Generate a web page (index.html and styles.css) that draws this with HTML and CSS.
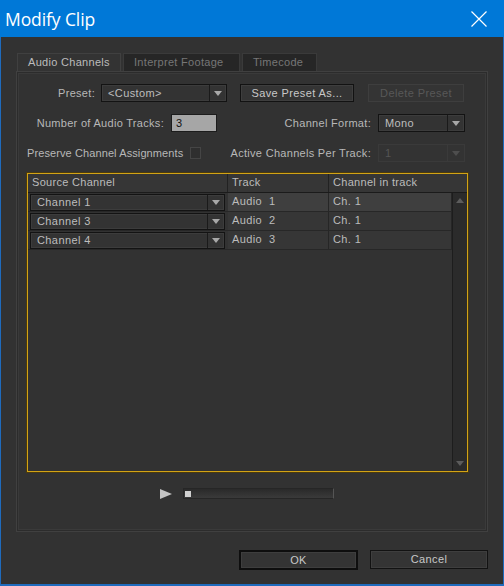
FILE: index.html
```html
<!DOCTYPE html>
<html>
<head>
<meta charset="utf-8">
<link rel="stylesheet" href="styles.css">
</head>
<body>
<div class="window">
  <div class="titlebar">
    <span class="title">Modify Clip</span>
    <svg class="close" width="16" height="16" viewBox="0 0 16 16"><path d="M0.5 0.5 L15.5 15.5 M15.5 0.5 L0.5 15.5" stroke="#ffffff" stroke-width="1.2" fill="none"/></svg>
  </div>
  <div class="content">
    <div class="tabs">
      <div class="tab active">Audio Channels</div>
      <div class="tab">Interpret Footage</div>
      <div class="tab">Timecode</div>
    </div>
    <div class="panel">
      <div class="row">
        <div class="label lab-preset">Preset:</div>
        <div class="dropdown dd-preset"><span class="dd-text">&lt;Custom&gt;</span><span class="dd-arrow"><i class="tri"></i></span></div>
        <div class="btn btn-save">Save Preset As...</div>
        <div class="btn btn-delete disabled">Delete Preset</div>
      </div>
      <div class="row">
        <div class="label lab-tracks">Number of Audio Tracks:</div>
        <div class="input">3</div>
        <div class="label lab-right">Channel Format:</div>
        <div class="dropdown dd-small"><span class="dd-text">Mono</span><span class="dd-arrow"><i class="tri"></i></span></div>
      </div>
      <div class="row">
        <div class="label lab-preserve">Preserve Channel Assignments</div>
        <div class="checkbox"></div>
        <div class="label lab-right2">Active Channels Per Track:</div>
        <div class="dropdown dd-small disabled"><span class="dd-text">1</span><span class="dd-arrow"><i class="tri"></i></span></div>
      </div>

      <div class="table">
        <div class="thead">
          <div class="col c-src">Source Channel</div>
          <div class="col c-trk">Track</div>
          <div class="col c-ch">Channel in track</div>
        </div>
        <div class="tbody">
          <div class="rows">
            <div class="trow selected">
              <div class="col c-src"><div class="dropdown dd-cell"><span class="dd-text">Channel 1</span><span class="dd-arrow"><i class="tri"></i></span></div></div>
              <div class="col c-trk cell">Audio&nbsp; 1</div>
              <div class="col c-ch cell">Ch. 1</div>
            </div>
            <div class="trow">
              <div class="col c-src"><div class="dropdown dd-cell"><span class="dd-text">Channel 3</span><span class="dd-arrow"><i class="tri"></i></span></div></div>
              <div class="col c-trk cell">Audio&nbsp; 2</div>
              <div class="col c-ch cell">Ch. 1</div>
            </div>
            <div class="trow">
              <div class="col c-src"><div class="dropdown dd-cell"><span class="dd-text">Channel 4</span><span class="dd-arrow"><i class="tri"></i></span></div></div>
              <div class="col c-trk cell">Audio&nbsp; 3</div>
              <div class="col c-ch cell">Ch. 1</div>
            </div>
          </div>
          <div class="scrollbar">
            <i class="sb-up"></i>
            <i class="sb-down"></i>
          </div>
        </div>
      </div>

      <div class="player">
        <svg class="play" width="12" height="10" viewBox="0 0 12 10"><path d="M0 0 L12 5 L0 10 Z" fill="#c4c4c4"/></svg>
        <div class="slider"><div class="thumb"></div></div>
      </div>
    </div>
    <div class="buttons">
      <div class="btn btn-ok">OK</div>
      <div class="btn btn-cancel">Cancel</div>
    </div>
  </div>
</div>
</body>
</html>
```

FILE: styles.css
```css
* { box-sizing: border-box; }
html, body { margin: 0; padding: 0; background: #323232; }
body { font-family: "Liberation Sans", Arial, sans-serif; font-size: 11px; color: #b8b8b8; }

.window {
  width: 504px; height: 586px;
  background: #323232;
  border-left: 1px solid #1f6bbd;
  border-right: 1px solid #1f6bbd;
  border-bottom: 2px solid #1f6bbd;
  display: flex; flex-direction: column;
}
.titlebar {
  height: 37px; background: #0078d7;
  margin: 0 -1px;
  display: flex; align-items: center; justify-content: space-between;
  padding: 0 17px 0 5px;
}
.title { font-family: "Open Sans", "Noto Sans", sans-serif; font-size: 17.5px; color: #ffffff; letter-spacing: -0.1px; }
.close { display: block; }

.content { padding: 16px 15px 0 15px; flex: 1; display: flex; flex-direction: column; }

.tabs { display: flex; height: 18px; margin-left: 1px; gap: 2px; }
.tab {
  height: 18px; line-height: 17px;
  padding: 0 10px;
  background: #262626; color: #767676;
  border: 1px solid #3a3a3a; border-bottom: none;
  letter-spacing: 0.3px;
}
.tab.active { background: #333333; color: #bcbcbc; width: 104px; padding-left: 10px; border-color: #404040; }
.tab:nth-child(2) { width: 117px; }
.tab:nth-child(3) { width: 75px; }

.panel {
  height: 461px;
  border: 1px solid #404040;
  box-shadow: inset 0 0 0 1px #2c2c2c, inset 0 0 0 2px #3a3a3a;
  padding: 12px 0 0 0;
  display: flex; flex-direction: column;
}

.row { display: flex; align-items: center; height: 18px; margin-bottom: 12px; }
.label { white-space: nowrap; color: #b8b8b8; letter-spacing: 0.3px; }
.lab-preset { width: 78px; text-align: right; margin-right: 6px; }
.lab-tracks { width: 147px; text-align: right; margin-right: 7px; }
.lab-right { width: 154px; text-align: right; margin-right: 7px; }
.lab-preserve { width: 163px; margin-left: 10px; letter-spacing: 0.1px; }
.lab-right2 { width: 170px; text-align: right; margin-right: 7px; }

.dropdown {
  display: flex; height: 18px;
  border: 1px solid #131313;
  background: #333333;
  box-shadow: inset 0 0 0 1px #3c3c3c;
  color: #bebebe;
}
.dd-text { flex: 1; padding-left: 6px; line-height: 16px; letter-spacing: 0.4px; }
.dd-arrow {
  width: 17px; border-left: 1px solid #1a1a1a;
  display: flex; align-items: center; justify-content: center;
}
.tri { display: block; width: 0; height: 0; border-left: 4px solid transparent; border-right: 4px solid transparent; border-top: 5px solid #a8a8a8; }
.dd-preset { width: 126px; }
.dd-small { width: 87px; }
.dropdown.disabled { border-color: #3a3a3a; box-shadow: none; color: #555555; }
.dropdown.disabled .dd-arrow { border-left-color: #3a3a3a; }
.dropdown.disabled .tri { border-top-color: #4e4e4e; }

.btn {
  height: 18px; line-height: 16px; text-align: center;
  border: 1px solid #121212;
  background: #343434;
  box-shadow: inset 0 0 0 1px #3e3e3e;
  color: #c8c8c8; letter-spacing: 0.4px;
}
.btn-save { width: 114px; margin-left: 13px; }
.btn-delete { width: 96px; margin-left: 14px; }
.btn.disabled { border-color: #3e3e3e; box-shadow: none; color: #585858; }

.input {
  width: 46px; height: 18px; line-height: 16px;
  background: #a6a6a6; border: 1px solid #1c1c1c;
  color: #111111; padding-left: 4px;
}
.checkbox { width: 11px; height: 12px; border: 1px solid #454545; background: #2f2f2f; }

.table {
  margin: -1px 0 0 10px;
  width: 441px; height: 299px;
  border: 1px solid #d2a316;
  box-shadow: 0 0 0 1px #4a3a0e;
  display: flex; flex-direction: column;
  background: #323232;
}
.thead { display: flex; height: 19px; background: #363636; border-bottom: 1px solid #1b1b1b; }
.col { flex: none; white-space: nowrap; }
.c-src { width: 200px; }
.c-trk { width: 101px; }
.c-ch { width: 123px; }
.thead .col { line-height: 17px; padding-left: 4px; color: #bcbcbc; letter-spacing: 0.3px; }
.thead .c-src, .thead .c-trk { border-right: 1px solid #222; }
.tbody { flex: 1; display: flex; }
.rows { width: 424px; }
.trow { display: flex; height: 19px; border-bottom: 1px solid #272727; }
.trow .c-src { padding: 1px 2px 0 2px; }
.dd-cell { width: 195px; height: 17px; }
.dd-cell .dd-text { line-height: 15px; }
.cell { line-height: 17px; padding-left: 4px; background: #363636; color: #bcbcbc; border-right: 1px solid #262626; letter-spacing: 0.4px; }
.trow.selected .cell { background: #3f3f3f; }
.scrollbar {
  width: 15px; background: #2b2b2b; border-left: 1px solid #1d1d1d;
  display: flex; flex-direction: column; justify-content: space-between; align-items: center;
  padding: 5px 0 5px 0;
}
.sb-up { display: block; width: 0; height: 0; border-left: 4px solid transparent; border-right: 4px solid transparent; border-bottom: 5px solid #5c5c5c; }
.sb-down { display: block; width: 0; height: 0; border-left: 4px solid transparent; border-right: 4px solid transparent; border-top: 5px solid #5c5c5c; }

.player { display: flex; align-items: center; margin: 16px 0 0 143px; height: 11px; }
.play { display: block; }
.slider {
  margin-left: 11px; width: 151px; height: 11px;
  background: linear-gradient(#2a2a2a, #3a3a3a);
  border: 1px solid #262626; border-right: 1px solid #555;
  position: relative;
}
.thumb { position: absolute; left: 1px; top: 2px; width: 6px; height: 6px; background: #d0d0d0; }

.buttons { display: flex; justify-content: flex-end; margin-top: 18px; gap: 12px; }
.btn-ok { width: 119px; height: 20px; border: 2px solid #0e0e0e; line-height: 16px; }
.btn-cancel { width: 118px; height: 19px; line-height: 17px; }
```
